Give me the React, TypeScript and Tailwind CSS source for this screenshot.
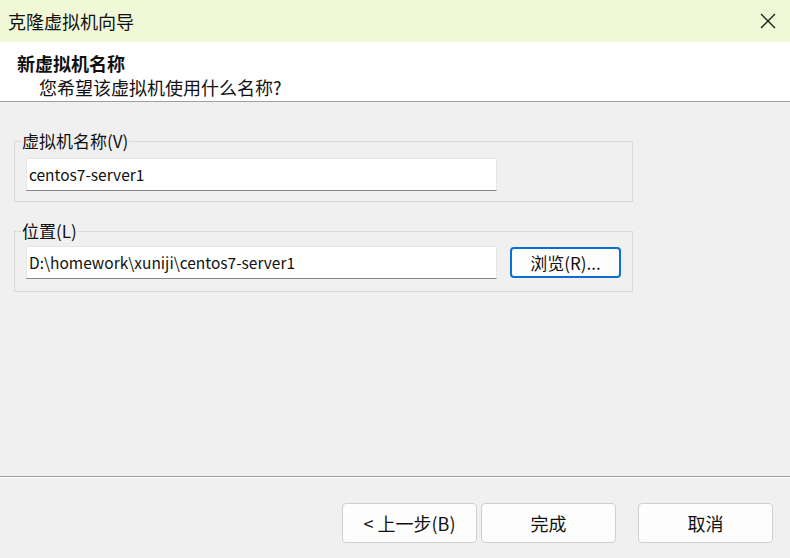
import React from 'react';

const font = { fontFamily: "'Noto Sans CJK SC', 'Noto Sans', sans-serif" };

function CloseIcon() {
  return (
    <svg width="16" height="16" viewBox="0 0 16 16" className="block">
      <path d="M1 1 L15 15 M15 1 L1 15" stroke="#1a1a1a" strokeWidth="1.3" fill="none" />
    </svg>
  );
}

function Field({ value }: { value: string }) {
  return (
    <div className="flex h-[33px] w-[471px] items-center border border-[#e6e6e6] border-b-[#858585] bg-white pl-[2px] text-[15.5px] text-[#111]">
      {value}
    </div>
  );
}

function WinButton({ children, primary }: { children: React.ReactNode; primary?: boolean }) {
  return (
    <button
      className={
        primary
          ? 'flex h-[31px] w-[111px] items-center justify-center rounded-[4px] border-2 border-[#0a6fd0] bg-[#fdfdfd] text-[17px] text-[#111]'
          : 'flex h-[40px] w-[135px] items-center justify-center rounded-[4px] border border-[#cfcfcf] bg-[#fdfdfd] text-[18px] text-[#111]'
      }
    >
      {children}
    </button>
  );
}

export default function App() {
  return (
    <div className="flex h-[558px] w-[790px] flex-col bg-[#f0f0f0] text-[#111]" style={font}>
      {/* title bar */}
      <div className="flex h-[42px] items-center justify-between bg-[#f0f8d8] pl-[8px] pr-[14px]">
        <span className="text-[18px] leading-none">克隆虚拟机向导</span>
        <CloseIcon />
      </div>

      {/* header */}
      <div className="h-[60px] border-b border-[#a0a0a0] bg-white pl-[17px] pt-[9px]">
        <div className="text-[18px] font-bold leading-[24px]">新虚拟机名称</div>
        <div className="pl-[22px] text-[18px] leading-[24px]">您希望该虚拟机使用什么名称?</div>
      </div>

      {/* body */}
      <div className="flex flex-1 flex-col gap-[18px] px-[14px] pt-[28px]">
        <fieldset className="w-[619px] border border-[#dadada] px-[11px] pb-[10px] pt-[6px]">
          <legend className="ml-[-5px] px-[1px] text-[17px] leading-[22px]">虚拟机名称(V)</legend>
          <Field value="centos7-server1" />
        </fieldset>

        <fieldset className="w-[619px] border border-[#dadada] px-[11px] pb-[12px] pt-[4px]">
          <legend className="ml-[-5px] px-[1px] text-[17px] leading-[22px]">位置(L)</legend>
          <div className="flex items-center gap-[13px]">
            <Field value="D:\homework\xuniji\centos7-server1" />
            <WinButton primary>浏览(R)...</WinButton>
          </div>
        </fieldset>
      </div>

      {/* footer */}
      <div className="h-[82px] border-t border-[#a0a0a0]">
        <div className="flex h-full items-start border-t border-white pl-[342px] pt-[25px]">
          <div className="flex gap-[4px]">
            <WinButton>&lt; 上一步(B)</WinButton>
            <WinButton>完成</WinButton>
          </div>
          <div className="ml-[22px]">
            <WinButton>取消</WinButton>
          </div>
        </div>
      </div>
    </div>
  );
}
